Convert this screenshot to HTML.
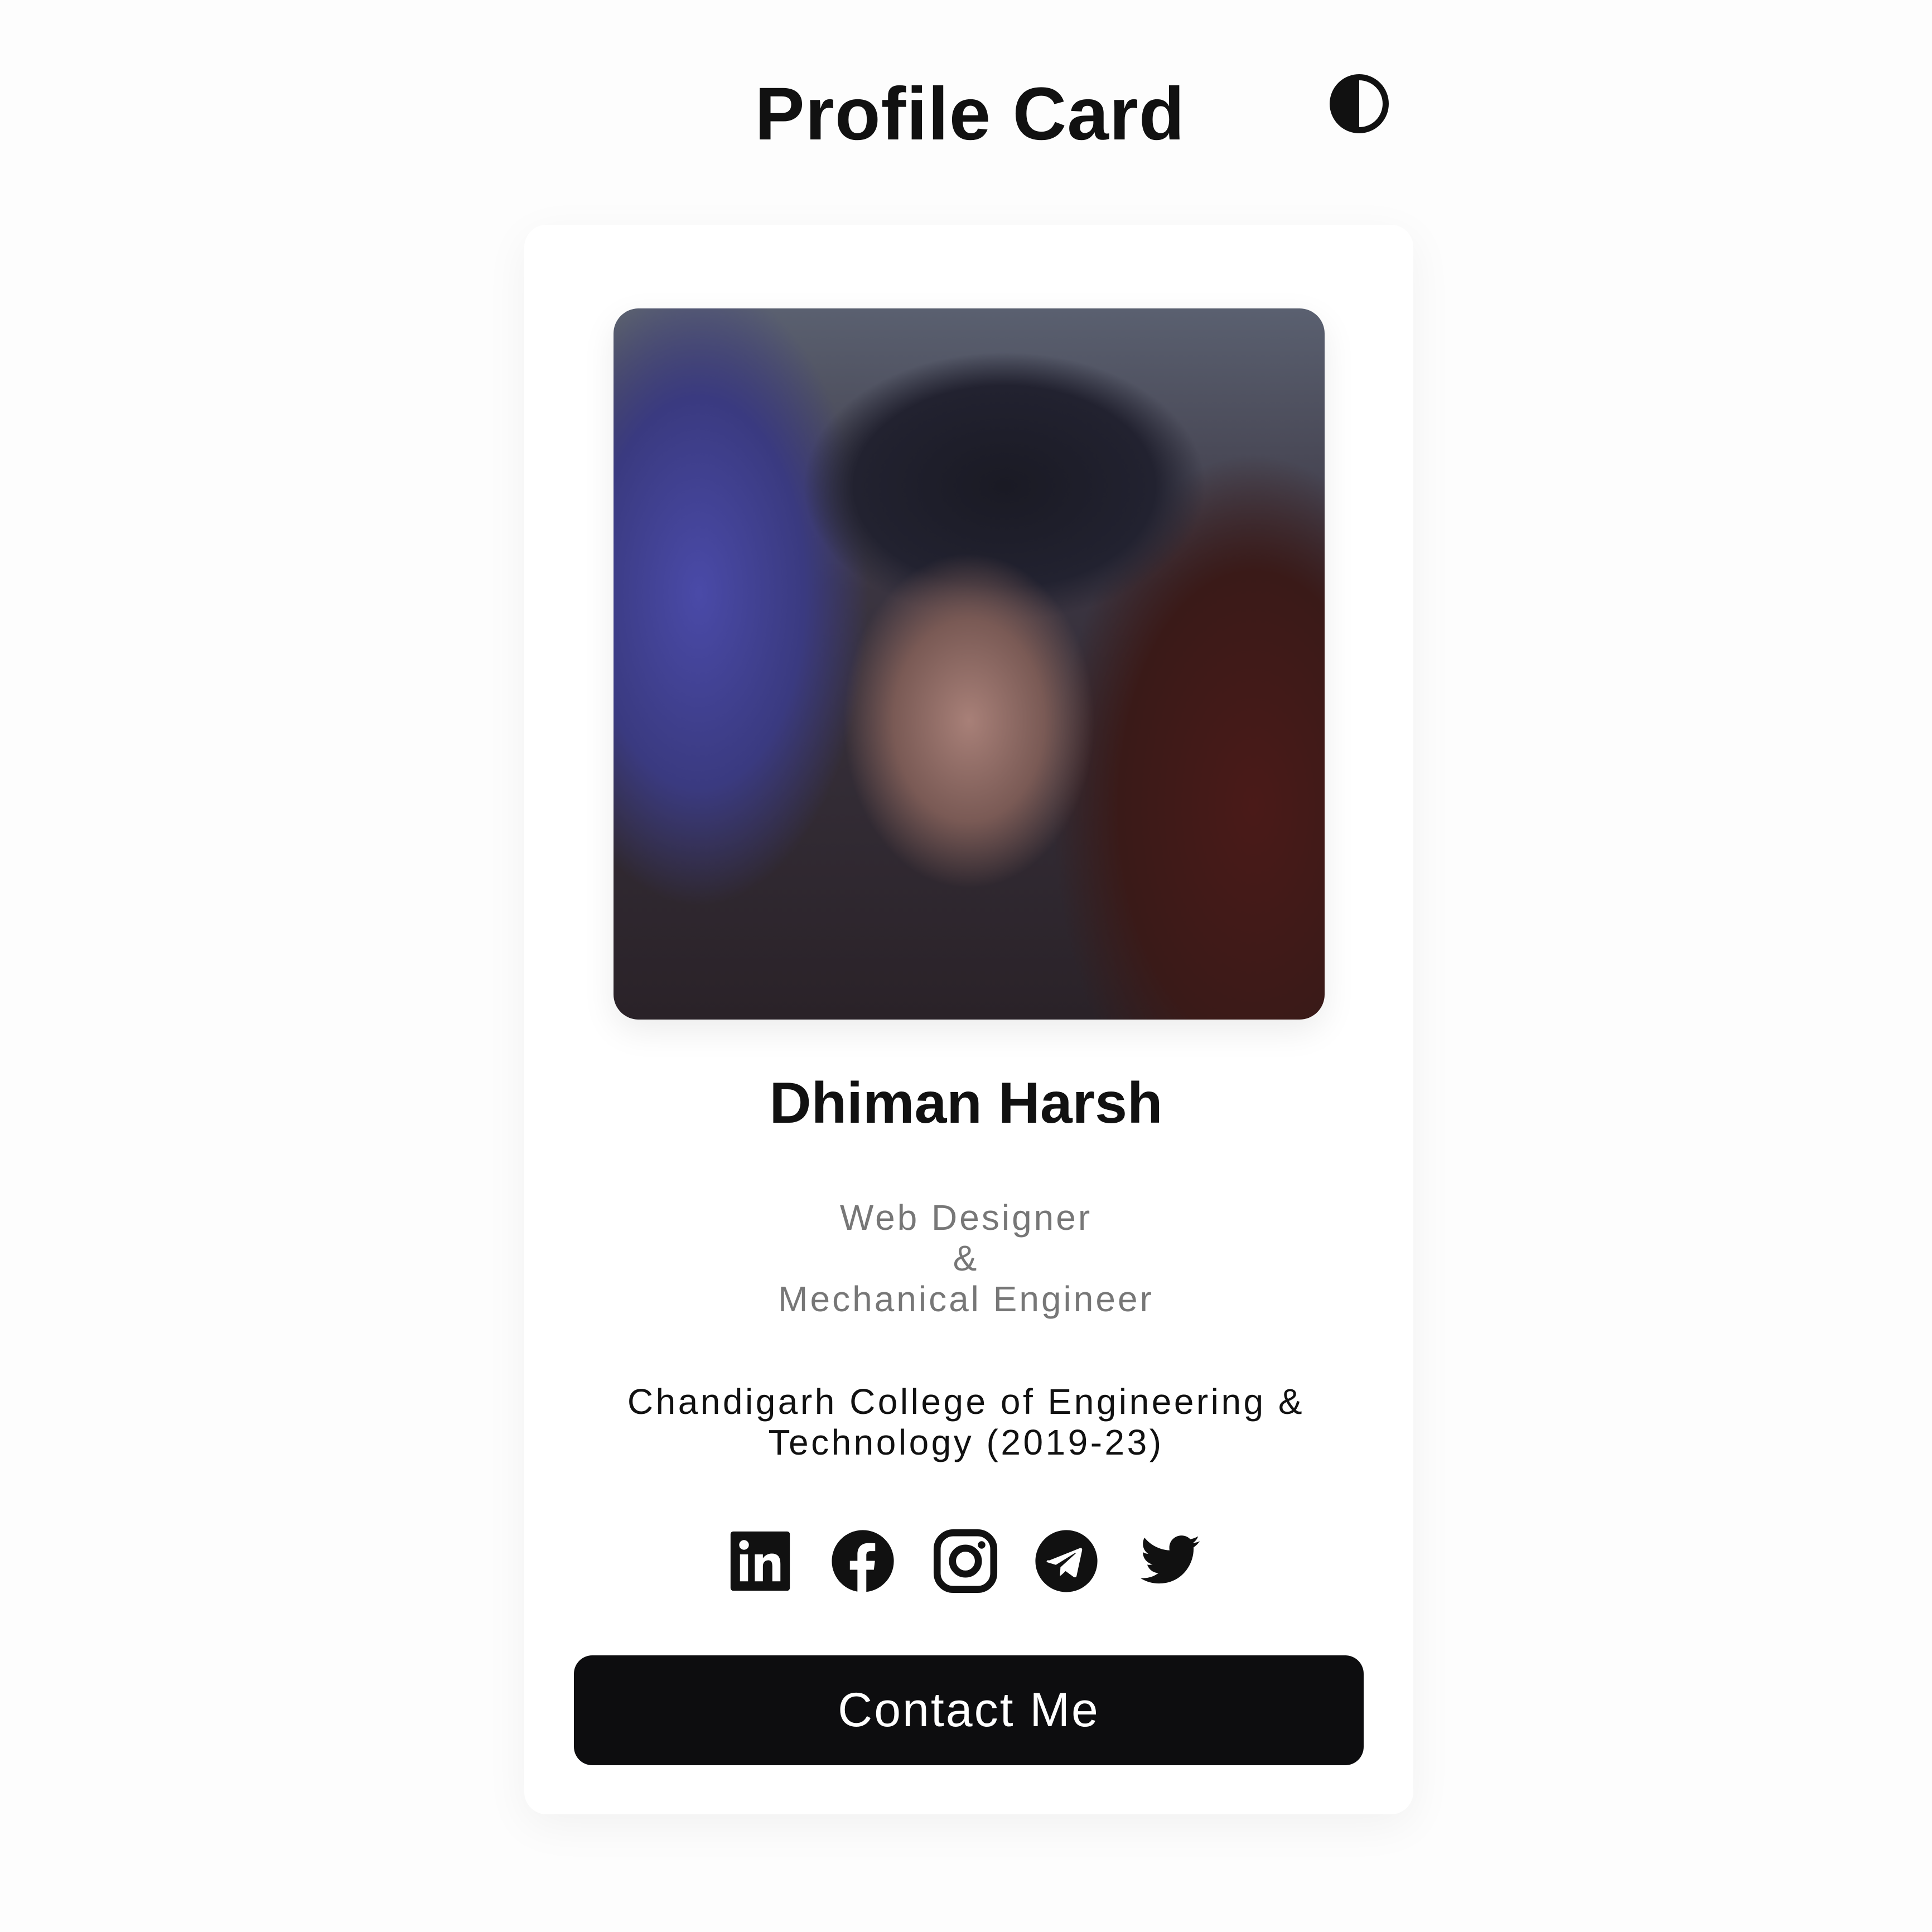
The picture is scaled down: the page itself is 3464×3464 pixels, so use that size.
<!DOCTYPE html>
<html><head><meta charset="utf-8"><style>
html,body{margin:0;padding:0;background:#fdfdfd;width:3464px;height:3464px;overflow:hidden;font-family:"Liberation Sans",sans-serif;}
.t{position:absolute;left:0;width:3464px;text-align:center;}
#title{top:128px;font-size:134px;font-weight:bold;color:#111;letter-spacing:1px;left:7px}
#toggle{position:absolute;left:2384px;top:133px;width:106px;height:106px;border:11px solid #111;border-radius:50%;box-sizing:border-box;background:linear-gradient(90deg,#111 50%,#fdfdfd 50%);}
#card{position:absolute;left:940px;top:403px;width:1594px;height:2850px;background:#fff;border-radius:40px;box-shadow:0 20px 80px rgba(0,0,0,0.05);}
#photo{position:absolute;left:1100px;top:553px;width:1275px;height:1275px;border-radius:45px;overflow:hidden;
background:
radial-gradient(ellipse 300px 400px at 50% 58%, #a88078 0%, #7a5a55 45%, rgba(60,40,40,0) 75%),
radial-gradient(ellipse 450px 300px at 55% 25%, #1a1a24 0%, #222230 60%, rgba(30,30,40,0) 80%),
radial-gradient(ellipse 380px 700px at 12% 40%, #4a4aa8 0%, #3a3a80 50%, rgba(50,50,100,0) 80%),
radial-gradient(ellipse 400px 700px at 90% 70%, #4a1a18 0%, #3a1a18 60%, rgba(40,20,20,0) 90%),
linear-gradient(180deg,#5a6070 0%,#3a3440 40%,#2a2228 100%);
box-shadow:0 20px 60px rgba(0,0,0,0.08);}
#name{top:1919px;font-size:104px;font-weight:bold;color:#111;}
#role{top:2147px;font-size:64px;line-height:73px;color:#777;letter-spacing:4px}
#college{top:2477px;font-size:64px;line-height:73px;color:#111;letter-spacing:4.5px}
.ic{position:absolute;top:2741px;width:116px;height:116px;}
#btn{position:absolute;left:1029px;top:2968px;width:1416px;height:197px;background:#0d0d0f;border-radius:33px;color:#fff;font-size:86px;line-height:197px;text-align:center;letter-spacing:3px}
</style></head><body>
<div id="title" class="t">Profile Card</div>
<div id="toggle"></div>
<div id="card"></div>
<div id="photo"></div>
<div id="name" class="t">Dhiman Harsh</div>
<div id="role" class="t">Web Designer<br>&amp;<br>Mechanical Engineer</div>
<div id="college" class="t">Chandigarh College of Engineering &amp;<br>Technology (2019-23)</div>
<svg class="ic" style="left:1305px" viewBox="0 0 24 24"><rect x="1" y="1" width="22" height="22" rx="1" fill="#111"/><rect x="4.5" y="9.5" width="3" height="10" fill="#fff"/><circle cx="6" cy="6" r="1.8" fill="#fff"/><path d="M10 9.5h3v1.5c.6-1 1.8-1.8 3.3-1.8 2.6 0 3.2 1.7 3.2 4v6.3h-3v-5.6c0-1.3-.3-2.2-1.5-2.2-1.3 0-2 .9-2 2.2v5.6h-3z" fill="#fff"/></svg>
<svg class="ic" style="left:1489px" viewBox="0 0 24 24"><circle cx="12" cy="12" r="11.5" fill="#111"/><path d="M13.3 23.5v-8.3h2.8l.4-3.3h-3.2V9.9c0-.9.3-1.6 1.6-1.6h1.7V5.4c-.3 0-1.3-.1-2.5-.1-2.5 0-4.1 1.5-4.1 4.2v2.4H7.2v3.3H10v8.3z" fill="#fff"/></svg>
<svg class="ic" style="left:1673px" viewBox="0 0 24 24"><rect x="1.5" y="1.5" width="21" height="21" rx="6" fill="none" stroke="#111" stroke-width="2.6"/><circle cx="12" cy="12" r="4.8" fill="none" stroke="#111" stroke-width="2.6"/><circle cx="18" cy="6" r="1.4" fill="#111"/></svg>
<svg class="ic" style="left:1854px" viewBox="0 0 24 24"><circle cx="12" cy="12" r="11.5" fill="#111"/><path d="M5.5 11.8l11.5-4.6c.5-.2 1 .1.8.9l-2 9.3c-.1.6-.6.8-1.1.5l-3-2.2-1.5 1.4c-.2.2-.3.3-.6.3l.2-3.1 5.6-5.1c.3-.2-.1-.3-.4-.1l-6.9 4.3-3-.9c-.6-.2-.6-.6.1-.9z" fill="#fff"/></svg>
<svg class="ic" style="left:2040px" viewBox="0 0 24 24"><path d="M23 4.6c-.8.4-1.7.6-2.6.7.9-.6 1.6-1.4 2-2.5-.9.5-1.9.9-2.9 1.1-.8-.9-2-1.4-3.3-1.4-2.5 0-4.5 2-4.5 4.5 0 .4 0 .7.1 1C8 7.800 4.7 6 2.5 3.3c-.4.7-.6 1.4-.6 2.3 0 1.6.8 2.9 2 3.7-.7 0-1.4-.2-2-.6v.1c0 2.2 1.6 4 3.6 4.4-.4.1-.8.2-1.2.2-.3 0-.6 0-.8-.1.6 1.8 2.2 3.1 4.2 3.1-1.5 1.2-3.5 1.9-5.6 1.9H1c2 1.3 4.4 2 6.9 2 8.3 0 12.8-6.9 12.8-12.8v-.6c.9-.6 1.7-1.400 2.3-2.3z" fill="#111"/></svg>
<div id="btn">Contact Me</div>
</body></html>
